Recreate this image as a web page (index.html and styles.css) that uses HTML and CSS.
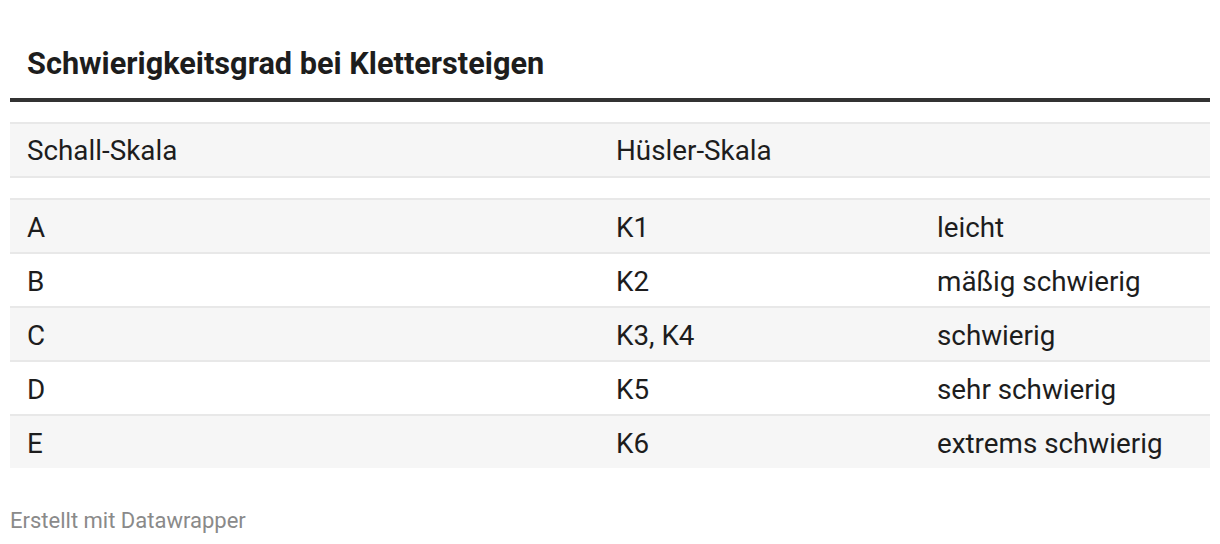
FILE: index.html
```html
<!DOCTYPE html>
<html lang="de">
<head>
<meta charset="utf-8">
<title>Schwierigkeitsgrad bei Klettersteigen</title>
<link rel="stylesheet" href="styles.css">
</head>
<body>
<div class="chart">
  <h1 class="title">Schwierigkeitsgrad bei Klettersteigen</h1>
  <div class="rule"></div>
  <table class="grid">
    <colgroup>
      <col class="c1"><col class="c2"><col class="c3">
    </colgroup>
    <thead>
      <tr><th>Schall-Skala</th><th>Hüsler-Skala</th><th></th></tr>
    </thead>
    <tbody>
      <tr class="odd"><td>A</td><td>K1</td><td>leicht</td></tr>
      <tr><td>B</td><td>K2</td><td>mäßig schwierig</td></tr>
      <tr class="odd"><td>C</td><td>K3, K4</td><td>schwierig</td></tr>
      <tr><td>D</td><td>K5</td><td>sehr schwierig</td></tr>
      <tr class="odd last"><td>E</td><td>K6</td><td>extrems schwierig</td></tr>
    </tbody>
  </table>
  <div class="footer">Erstellt mit Datawrapper</div>
</div>
</body>
</html>
```
FILE: styles.css
```css
* { box-sizing: border-box; }
html, body { margin: 0; padding: 0; background: #fff; }
body {
  font-family: Roboto, "Liberation Sans", sans-serif;
  color: #1d1d1d;
}
.chart {
  padding: 0 10px;
  width: 1220px;
}
.title {
  margin: 0;
  padding: 45px 0 0 17px;
  height: 98px;
  font-size: 30.7px;
  line-height: 38px;
  font-weight: 700;
  color: #1d1d1d;
}
.rule {
  height: 4px;
  background: #333;
}
.grid {
  width: 1200px;
  margin-top: 20px;
  border-collapse: separate;
  border-spacing: 0;
  table-layout: fixed;
}
.c1 { width: 589px; }
.c2 { width: 321px; }
.c3 { width: 290px; }
.grid th, .grid td {
  text-align: left;
  font-weight: 400;
  font-size: 27.8px;
  line-height: 32px;
  padding: 3px 0 0 17px;
  vertical-align: middle;
  border-top: 2px solid #e8e8e8;
  white-space: nowrap;
}
.grid th {
  background: #f6f6f6;
  height: 56px;
  padding-top: 1px;
  border-bottom: 2px solid #e8e8e8;
}
.grid tbody::before {
  content: "";
  display: table-row;
  height: 20px;
}
.grid td { height: 54px; }
.odd td { background: #f6f6f6; }
.footer {
  margin-top: 40px;
  font-size: 22px;
  color: #8a8a8a;
  line-height: 26px;
}
```
